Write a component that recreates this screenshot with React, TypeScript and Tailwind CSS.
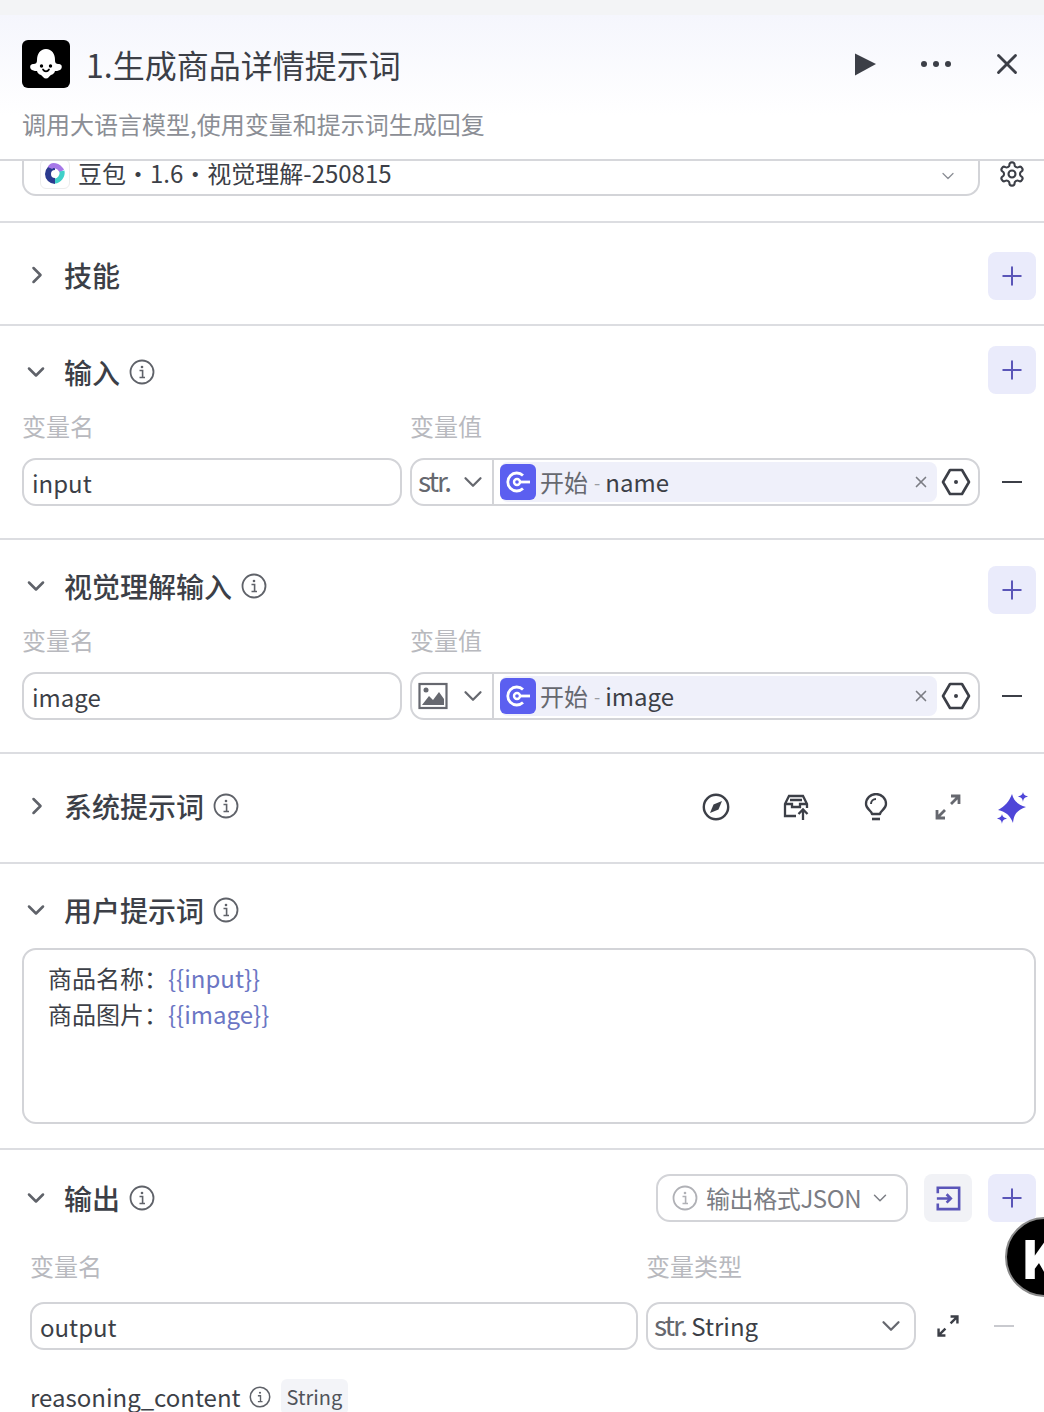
import { ChevronDown, ChevronRight, Plus, X } from "lucide-react";

const font = { fontFamily: '"Noto Sans CJK SC", "Noto Sans", sans-serif' };

function InfoIcon({ size = 26, color = "#5f6269" }: { size?: number; color?: string }) {
    return (
        <svg width={size} height={size} viewBox="0 0 26 26" fill="none" className="shrink-0">
            <circle cx="13" cy="13" r="11.5" stroke={color} strokeWidth="1.8" />
            <circle cx="13" cy="8" r="1.3" fill={color} />
            <path d="M10.5 11.5H13.6V18M10.5 18.5H16" stroke={color} strokeWidth="1.6" />
        </svg>
    );
}

function ExpandIcon({ color = "#3c3f47", size = 28 }: { color?: string; size?: number }) {
    return (
        <svg width={size} height={size} viewBox="0 0 28 28" fill="none" className="shrink-0">
            <path d="M3 25L11 17M3 17V25H11M25 3L17 11M17 3H25V11" stroke={color} strokeWidth="2.8" />
        </svg>
    );
}

function AddButton() {
    return (
        <div className="w-12 h-12 rounded-lg bg-[#eaebfb] flex items-center justify-center shrink-0">
            <Plus size={30} strokeWidth={1.6} color="#5a55b8" />
        </div>
    );
}

function StartTag({ field }: { field: string }) {
    return (
        <div className="flex-1 h-10 flex items-center bg-[#eff0fa] rounded-lg">
            <div className="w-9 h-9 rounded-md bg-[#5b5ff0] flex items-center justify-center shrink-0">
                <svg width="28" height="28" viewBox="0 0 28 28" fill="none">
                    <path d="M19 7.500A9 9 0 1 0 19 20.500" stroke="white" strokeWidth="2.800" />
                    <circle cx="13" cy="14" r="3" stroke="white" strokeWidth="2.400" />
                    <path d="M15 14H26" stroke="white" strokeWidth="2.800" />
                </svg>
            </div>
            <span className="ml-1 text-[#66686f]">开始</span>
            <span className="ml-1.5 mr-[5px] text-[#9a9ca2] text-lg">-</span>
            <span className="text-[#3c3f47]">{field}</span>
            <X size={18} strokeWidth={2.2} color="#7b7d84" className="ml-auto mr-[7px]" />
        </div>
    );
}

function HexIcon() {
    return (
        <svg width="30" height="30" viewBox="0 0 30 30" fill="none" className="shrink-0">
            <path d="M9 3H21L28 15L21 27H9L2 15Z" stroke="#3c3f47" strokeWidth="2.600" strokeLinejoin="round" />
            <circle cx="15" cy="15" r="2" fill="#3c3f47" />
        </svg>
    );
}

function ImageIcon() {
    return (
        <svg width="30" height="28" viewBox="0 0 30 28" fill="none" className="shrink-0">
            <rect x="1.500" y="2" width="27" height="24" stroke="#66686f" strokeWidth="2.200" />
            <circle cx="8" cy="8" r="2.500" fill="#66686f" />
            <path d="M4 23L11 14L15 18L21 10L26 17V23Z" fill="#66686f" />
        </svg>
    );
}

function VarRow({ name, type, field }: { name: string; type: React.ReactNode; field: string }) {
    return (
        <div className="flex items-center">
            <div className="w-[380px] h-12 rounded-[14px] border-2 border-[#d3d4d8] flex items-center px-2 pt-0.5 text-[#3c3f47]">{name}</div>
            <div className="ml-2 w-[570px] h-12 rounded-[14px] border-2 border-[#d3d4d8] flex items-center">
                <div className="w-[82px] h-full border-r-2 border-[#d3d4d8] flex items-center justify-between pl-1.5 pr-1 shrink-0">
                    {type}
                    <ChevronDown size={30} strokeWidth={1.800} color="#66686f" />
                </div>
                <div className="flex-1 flex items-center pl-1.5 pr-[7px] gap-1">
                    <StartTag field={field} />
                    <HexIcon />
                </div>
            </div>
            <div className="ml-[22px] w-5 h-0.5 bg-[#3c3f47]" />
        </div>
    );
}

function Title({ text, open, info = true }: { text: string; open: boolean; info?: boolean }) {
    return (
        <div className="flex items-center">
            {open ? (
                <ChevronDown size={28} strokeWidth={2.200} color="#5f6269" className="shrink-0" />
            ) : (
                <ChevronRight size={28} strokeWidth={2.200} color="#5f6269" className="shrink-0 ml-px -mr-px" />
            )}
            <span className="ml-[14px] text-[28px] leading-10 font-medium text-[#3c3f47]">{text}</span>
            {info && (
                <div className="ml-[9px]">
                    <InfoIcon />
                </div>
            )}
        </div>
    );
}

function Labels({ second }: { second: string }) {
    return (
        <div className="flex text-[#b8b9be] leading-8">
            <div className="w-[388px]">变量名</div>
            <div>{second}</div>
        </div>
    );
}

function CompassIcon() {
    return (
        <svg width="28" height="28" viewBox="0 0 28 28" fill="none">
            <circle cx="14" cy="14" r="12.200" stroke="#3c3f47" strokeWidth="2.400" />
            <path d="M20 8L16.500 16.500L8 20L11.500 11.500Z" fill="#3c3f47" />
        </svg>
    );
}

function InboxIcon() {
    return (
        <svg width="28" height="28" viewBox="0 0 28 28" fill="none">
            <path d="M14 23H3V11L7 3H21L25 11V15M3 11H10V14H18V11H25M8 7H20" stroke="#3c3f47" strokeWidth="2.300" />
            <path d="M21 27V17M16.500 21L21 16.500L25.500 21" stroke="#3c3f47" strokeWidth="2.300" />
        </svg>
    );
}

function BulbIcon() {
    return (
        <svg width="28" height="28" viewBox="0 0 28 28" fill="none">
            <path d="M10 21C9.500 17.500 4 16 4 11A10 10 0 0 1 24 11C24 16 18.500 17.500 18 21Z" stroke="#3c3f47" strokeWidth="2.300" strokeLinejoin="round" />
            <path d="M9 11A5 5 0 0 1 14 6" stroke="#3c3f47" strokeWidth="2" />
            <path d="M10 26H18" stroke="#3c3f47" strokeWidth="2.600" />
        </svg>
    );
}

function SparkIcon() {
    return (
        <svg width="32" height="32" viewBox="0 0 32 32" fill="#4f46d8">
            <path d="M15 2C17 9 20 12 29 15C21 18 17 21 16 31C13 23 9 20 1 18C8 14 12 10 15 2Z" />
            <path d="M26 0C26.500 2.500 27.500 3.500 31 4.500C27.500 5.500 26.500 6.500 26 10C25.500 6.500 24.500 5.500 21 4.500C24.500 3.500 25.500 2.500 26 0Z" />
            <path d="M5 22C5.500 24.500 6.500 25.500 10 26.500C6.500 27.500 5.500 28.500 5 32C4.500 28.500 3.500 27.500 0 26.500C3.500 25.500 4.500 24.500 5 22Z" />
        </svg>
    );
}

export default function App() {
    return (
        <div className="relative w-[1044px] h-[1412px] overflow-hidden bg-[#f3f4f6] text-2xl" style={font}>
            <div className="h-[15px]" />
            <div className="bg-white">
                {/* header */}
                <div className="h-[146px] bg-gradient-to-b from-[#f5f6fd] to-white to-70% border-b-2 border-[#d6d7db] pl-[22px] pr-6 relative">
                    <div className="flex items-center pt-[25px]">
                        <div className="w-12 h-12 rounded-md bg-black flex items-center justify-center shrink-0">
                            <svg width="36" height="34" viewBox="0 0 36 34" fill="none">
                                <path d="M18 2C24 2 27 7 27 13C27 16 28 17 31 17C34 17 35 21 32 23C30 24 28 24 27 24C26 28 23 27 21 30C19 32 17 32 15 30C13 27 10 28 9 24C8 24 6 24 4 23C1 21 2 17 5 17C8 17 9 16 9 13C9 7 12 2 18 2Z" fill="white" />
                                <circle cx="13.500" cy="19" r="1.700" fill="black" />
                                <circle cx="22.500" cy="19" r="1.700" fill="black" />
                                <path d="M15 22.500C16.500 25 19.500 25 21 22.500" stroke="black" strokeWidth="1.700" strokeLinecap="round" />
                            </svg>
                        </div>
                        <div className="ml-4 text-[32px] leading-[44px] text-[#3c3f47]">1.生成商品详情提示词</div>
                        <div className="ml-auto flex items-center">
                            <svg width="24" height="24" viewBox="0 0 24 24" fill="#3c3f47">
                                <path d="M2 1.500L23 12L2 23.500Z" />
                            </svg>
                            <div className="ml-[44px] flex gap-[6px]">
                                <div className="w-1.5 h-1.5 rounded-full bg-[#3c3f47]" />
                                <div className="w-1.5 h-1.5 rounded-full bg-[#3c3f47]" />
                                <div className="w-1.5 h-1.5 rounded-full bg-[#3c3f47]" />
                            </div>
                            <X size={34} strokeWidth={2} color="#3c3f47" className="ml-[39px] -mr-1" />
                        </div>
                    </div>
                    <div className="mt-4 leading-10 text-[#8b8e95]">调用大语言模型,使用变量和提示词生成回复</div>
                </div>

                {/* model */}
                <div className="h-[62px] border-b-2 border-[#dcdde1] pl-[22px] flex items-start">
                    <div className="w-[958px] h-[35px] border-2 border-t-0 border-[#d3d4d8] rounded-b-[14px] flex items-center pl-4 pr-5 text-[#3c3f47]">
                        <div className="w-[30px] h-[30px] rounded-md border border-[#eceded] flex items-center justify-center -mt-2 shrink-0">
                            <svg width="22" height="24" viewBox="0 0 22 24" fill="none">
                                <path d="M11 5A7 7 0 1 0 11 19" stroke="#2b3a8f" strokeWidth="6" />
                                <path d="M6 6C8 2 14 3 18 9" stroke="#a678e8" strokeWidth="5" />
                                <path d="M18 9C19 14 15 19 11 19" stroke="#3fd0c8" strokeWidth="5" />
                            </svg>
                        </div>
                        <span className="ml-2 -mt-2.5 leading-8">豆包•1.6•视觉理解-250815</span>
                        <ChevronDown size={20} strokeWidth={1.500} color="#8b8e95" className="ml-auto -mt-1" />
                    </div>
                    <svg width="28" height="28" viewBox="0 0 24 24" fill="none" stroke="#3c3f47" strokeWidth="1.800" className="ml-[18px] -mt-px">
                        <path d="M12.220 2h-.440a2 2 0 0 0-2 2v.180a2 2 0 0 1-1 1.730l-.430.250a2 2 0 0 1-2 0l-.150-.080a2 2 0 0 0-2.730.730l-.220.380a2 2 0 0 0 .730 2.730l.150.100a2 2 0 0 1 1 1.720v.510a2 2 0 0 1-1 1.740l-.150.090a2 2 0 0 0-.730 2.730l.220.380a2 2 0 0 0 2.730.730l.150-.080a2 2 0 0 1 2 0l.430.250a2 2 0 0 1 1 1.730V20a2 2 0 0 0 2 2h.440a2 2 0 0 0 2-2v-.180a2 2 0 0 1 1-1.730l.430-.250a2 2 0 0 1 2 0l.150.080a2 2 0 0 0 2.730-.730l.220-.390a2 2 0 0 0-.730-2.730l-.150-.080a2 2 0 0 1-1-1.740v-.500a2 2 0 0 1 1-1.740l.150-.090a2 2 0 0 0 .730-2.730l-.220-.380a2 2 0 0 0-2.730-.730l-.150.080a2 2 0 0 1-2 0l-.430-.250a2 2 0 0 1-1-1.730V4a2 2 0 0 0-2-2z" />
                        <circle cx="12" cy="12" r="3" />
                    </svg>
                </div>

                {/* skills */}
                <div className="h-[103px] border-b-2 border-[#dcdde1] pl-[22px] pr-2 pt-[29px] flex items-start justify-between">
                    <div className="pt-[3px]">
                        <Title text="技能" open={false} info={false} />
                    </div>
                    <AddButton />
                </div>

                {/* input */}
                <div className="h-[214px] border-b-2 border-[#dcdde1] pl-[22px] pr-2 pt-[20px]">
                    <div className="flex items-center justify-between">
                        <div className="mt-1">
                            <Title text="输入" open />
                        </div>
                        <AddButton />
                    </div>
                    <div className="mt-4">
                        <Labels second="变量值" />
                    </div>
                    <div className="mt-4">
                        <VarRow name="input" field="name" type={<span className="text-[28px] leading-none tracking-[-2px] text-[#66686f] -mt-1">str.</span>} />
                    </div>
                </div>

                {/* vision input */}
                <div className="h-[214px] border-b-2 border-[#dcdde1] pl-[22px] pr-2 pt-[26px]">
                    <div className="flex items-center justify-between">
                        <div className="-mt-2">
                            <Title text="视觉理解输入" open />
                        </div>
                        <AddButton />
                    </div>
                    <div className="mt-2.5">
                        <Labels second="变量值" />
                    </div>
                    <div className="mt-4">
                        <VarRow name="image" field="image" type={<ImageIcon />} />
                    </div>
                </div>

                {/* system prompt */}
                <div className="h-[110px] border-b-2 border-[#dcdde1] pl-[22px] pr-[18px] pt-[32px] flex items-start">
                    <Title text="系统提示词" open={false} />
                    <div className="ml-auto flex items-center">
                        <div className="mt-1 flex items-center">
                            <CompassIcon />
                            <div className="ml-[52px]">
                                <InboxIcon />
                            </div>
                            <div className="ml-[52px]">
                                <BulbIcon />
                            </div>
                            <div className="ml-[44px]">
                                <ExpandIcon color="#66686f" />
                            </div>
                        </div>
                        <div className="ml-[35px] mt-1.5 -mr-[3px]">
                            <SparkIcon />
                        </div>
                    </div>
                </div>

                {/* user prompt */}
                <div className="h-[286px] border-b-2 border-[#dcdde1] pl-[22px] pr-2 pt-[26px]">
                    <Title text="用户提示词" open />
                    <div className="mt-[18px] h-[176px] rounded-[14px] border-2 border-[#d3d4d8] px-6 pt-[10px] leading-9 text-[#3c3f47]">
                        <div>
                            商品名称：<span className="text-[#6b76c4]">{"{{input}}"}</span>
                        </div>
                        <div>
                            商品图片：<span className="text-[#6b76c4]">{"{{image}}"}</span>
                        </div>
                    </div>
                </div>

                {/* output */}
                <div className="pl-[22px] pr-2 pt-[24px]">
                    <div className="flex items-center">
                        <Title text="输出" open />
                        <div className="ml-auto w-[252px] h-12 rounded-[14px] border-2 border-[#d3d4d8] flex items-center pl-3.5 text-[#7b7d84]">
                            <InfoIcon color="#b0b1b6" />
                            <span className="ml-2 tracking-[-0.4px]">输出格式JSON</span>
                            <ChevronDown size={22} strokeWidth={1.600} color="#7b7d84" className="ml-2" />
                        </div>
                        <div className="ml-4 w-12 h-12 rounded-lg bg-[#f1f2f6] flex items-center justify-center">
                            <svg width="26" height="26" viewBox="0 0 28 28" fill="none" stroke="#5a55b8" strokeWidth="2.800">
                                <path d="M3 9V3H26V26H3V20M2 14.500H17M12.500 10L17 14.500L12.500 19" />
                            </svg>
                        </div>
                        <div className="ml-4">
                            <AddButton />
                        </div>
                    </div>
                    <div className="pl-2 mt-[28px] flex text-[#b8b9be] leading-8">
                        <div className="w-[616px]">变量名</div>
                        <div>变量类型</div>
                    </div>
                    <div className="pl-2 mt-[20px] flex items-center">
                        <div className="w-[608px] h-12 rounded-[14px] border-2 border-[#d3d4d8] flex items-center px-2 pt-0.5 text-[#3c3f47]">output</div>
                        <div className="ml-2 w-[270px] h-12 rounded-[14px] border-2 border-[#d3d4d8] flex items-center justify-between pl-1.5 pr-2 text-[#3c3f47]">
                            <span>
                                <span className="text-[28px] leading-none tracking-[-2px] text-[#66686f]">str.</span> String
                            </span>
                            <ChevronDown size={30} strokeWidth={1.800} color="#66686f" />
                        </div>
                        <div className="ml-[20px]">
                            <ExpandIcon size={24} />
                        </div>
                        <div className="ml-[34px] w-5 h-0.5 bg-[#c9cacf]" />
                    </div>
                    <div className="pl-2 mt-[29px] flex items-center text-[#3c3f47]">
                        <span>reasoning_content</span>
                        <div className="ml-2">
                            <InfoIcon size={22} />
                        </div>
                        <span className="ml-2.5 px-1.5 rounded-md bg-[#f3f4f8] text-xl leading-9 text-[#50535a]">String</span>
                    </div>
                </div>
            </div>

            {/* floating badge cut off by the window edge */}
            <div className="absolute left-[1005px] top-[1217px] w-20 h-20 rounded-full bg-black border-2 border-[#8a8a8a] flex items-center pl-[14px] overflow-hidden">
                <span className="text-white font-black text-[52px] leading-none">K</span>
            </div>
        </div>
    );
}
